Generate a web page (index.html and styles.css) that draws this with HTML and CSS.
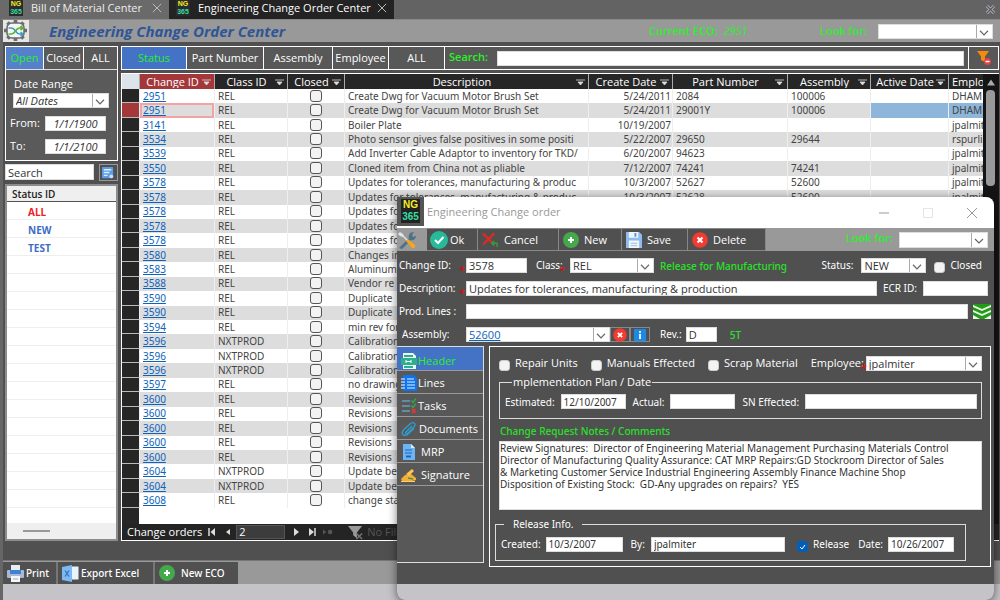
FILE: index.html
```html
<!DOCTYPE html>
<html lang="en">
<head>
<meta charset="utf-8">
<title>Engineering Change Order Center</title>
<link rel="stylesheet" href="styles.css">
</head>
<body>
<svg class="defs" aria-hidden="true">
  <symbol id="x" viewBox="0 0 12 12"><path d="M1 1l10 10M11 1L1 11" fill="none" stroke="currentColor" stroke-width="1.2"/></symbol>
  <symbol id="plus" viewBox="0 0 16 16"><circle cx="8" cy="8" r="8" fill="#43a94b"/><path d="M8 5v6M5 8h6" stroke="#fff" stroke-width="2"/></symbol>
  <symbol id="del" viewBox="0 0 16 16"><circle cx="8" cy="8" r="7.8" fill="#f23c32"/><path d="M5.5 5.5l5 5M10.5 5.5l-5 5" stroke="#fff" stroke-width="2"/></symbol>
</svg>

<nav class="tabs">
  <a class="tab" href="#bom"><span class="ng"><b>NG</b><i>365</i></span>Bill of Material Center<svg class="tab-x"><use href="#x"/></svg></a>
  <a class="tab tab-on" href="#eco"><span class="ng"><b>NG</b><i>365</i></span>Engineering Change Order Center<svg class="tab-x"><use href="#x"/></svg></a>
  <button class="app-x" aria-label="Close all"><svg viewBox="0 0 12 12"><path d="M2 2l8 8M10 2l-8 8" stroke="#a5a7ad" stroke-width="3.4"/><path d="M2 2l8 8M10 2l-8 8" stroke="#55575c" stroke-width="1.4"/></svg></button>
</nav>

<div class="app">
<header class="titlebar">
  <svg class="logo" viewBox="0 0 26 22"><rect width="26" height="22" fill="#e6e6e6"/><path d="M12.500 0v21M1 10.500h23M4.500 2.500l16 16M20.500 2.500l-16 16" stroke="#6c6c6c" stroke-width="3.600"/><rect x="4" y="3" width="17" height="15" rx="5" fill="#f5f5f5" stroke="#6c6c6c" stroke-width="1.6"/><path d="M5.500 8h3c4 0 4 6 8 6h3M17.500 12l2.500 2-2.500 2" fill="none" stroke="#3a9fc0" stroke-width="1.5"/><path d="M5.500 14h3c4 0 4-6 8-6h3M17.500 6L20 8l-2.500 2" fill="none" stroke="#57b43c" stroke-width="1.700"/></svg>
  <h1>Engineering Change Order Center</h1>
  <p class="current">Current ECO: <em>2951</em></p>
  <label class="look" for="look1">Look for:</label>
  <select id="look1" class="field look-select"><option></option></select>
</header>

<main class="work">
  <aside class="side">
    <section class="range">
      <div class="seg"><button class="on">Open</button><button>Closed</button><button>ALL</button></div>
      <div class="range-body">
        <label for="dr" class="range-title">Date Range</label>
        <select id="dr" class="field ital"><option>All Dates</option></select>
        <div class="range-row"><label for="from">From:</label><input id="from" class="field" value="1/1/1900"></div>
        <div class="range-row"><label for="to">To:</label><input id="to" class="field" value="1/1/2100"></div>
      </div>
    </section>
    <div class="side-search">
      <input class="field" aria-label="Search" value="Search">
      <button aria-label="Run search"><svg viewBox="0 0 18 15"><rect x="2" y="1" width="12" height="12" rx="1" fill="#5b9ee6"/><path d="M4 4h8M4 7h6M4 10h4" stroke="#dcecff" stroke-width="1.5"/><circle cx="12" cy="11" r="2" fill="#c8e0fb"/></svg></button>
    </div>
    <section class="status">
      <h2>Status ID</h2>
      <a class="red" href="#all">ALL</a>
      <a href="#new">NEW</a>
      <a href="#test">TEST</a>
      <div class="lines"></div>
      <div class="hscroll"><span></span></div>
    </section>
  </aside>

  <section class="content">
    <div class="filterbar">
      <button class="f1 on">Status</button><button class="f2">Part Number</button><button class="f3">Assembly</button><button class="f4">Employee</button><button class="f4">ALL</button>
      <label for="q">Search:</label>
      <input id="q" class="field q">
      <button class="clear" aria-label="Clear filter"><svg viewBox="0 0 16 16"><path d="M1 1h12L9 6.500V12l-4-2V6.500z" fill="#f58a0c"/><circle cx="11.500" cy="11.500" r="3.500" fill="#e34242"/><path d="M9.500 11.500h4" stroke="#fff" stroke-width="1.500"/></svg></button>
    </div>
    <div class="grid">
      <div class="grid-main">
        <div class="table-wrap">
          <table>
            <colgroup><col class="c0"><col class="c1"><col class="c2"><col class="c3"><col class="c4"><col class="c5"><col class="c6"><col class="c7"><col class="c8"><col class="c9"></colgroup>
            <thead><tr id="head"></tr></thead>
            <tbody id="rows"></tbody>
          </table>
        </div>
        <div class="vscroll"><svg viewBox="0 0 10 8"><path d="M5 1l4 6H1z" fill="#aaa"/></svg><span></span></div>
      </div>
      <footer class="pager">
        <label for="page">Change orders</label>
        <button aria-label="First"><svg viewBox="0 0 10 10"><path d="M2 1v8" stroke="#ddd" stroke-width="1.500"/><path d="M8 1v8L3.500 5z" fill="#ddd"/></svg></button>
        <button aria-label="Previous"><svg viewBox="0 0 10 10"><path d="M7 2v6L3 5z" fill="#ddd"/></svg></button>
        <input id="page" value="2">
        <button aria-label="Next"><svg viewBox="0 0 10 10"><path d="M3 1v8l5-4z" fill="#ddd"/></svg></button>
        <button aria-label="Last"><svg viewBox="0 0 10 10"><path d="M2 1v8l5-4z" fill="#ddd"/><path d="M8 1v8" stroke="#ddd" stroke-width="1.500"/></svg></button>
        <button aria-label="New record"><svg viewBox="0 0 12 10"><path d="M0 2v6l4-3z" fill="#555"/><circle cx="8.500" cy="5" r="2.800" fill="#555"/></svg></button>
        <span class="nofilter"><svg viewBox="0 0 18 16"><path d="M1 1h15l-5.500 7v6l-4-3V8z" fill="#999"/><path d="M10 9l6 6M16 9l-6 6" stroke="#777" stroke-width="1.500"/></svg>No Filter</span>
      </footer>
    </div>
  </section>
</main>

<footer class="actions">
  <button class="print"><svg viewBox="0 0 17 17"><path d="M4 0h9v6H4z" fill="#e8eef6"/><rect x="0" y="5" width="17" height="8" rx="1" fill="#a9b9d3"/><rect x="3" y="5" width="11" height="4" fill="#3f80d4"/><path d="M4 11h9v6H4z" fill="#f4f6fa"/><path d="M6 14h5" stroke="#aaa"/></svg>Print</button>
  <button class="export"><svg viewBox="0 0 17 17"><rect x="8" y="1.500" width="8.500" height="13" fill="#e9f3fd"/><path d="M0 2l10-2v17L0 15z" fill="#7dbaf2"/><path d="M3 5.500l4 6M7 5.500l-4 6" stroke="#2f74c0" stroke-width="1.300"/></svg>Export Excel</button>
  <button class="neweco"><svg><use href="#plus"/></svg>New ECO</button>
</footer>
<div class="strip"></div>
</div>

<section class="dialog" role="dialog" aria-labelledby="dt">
  <header class="dlg-title">
    <span class="ng ng-lg"><b>NG</b><i>365</i></span>
    <h2 id="dt">Engineering Change order</h2>
    <button aria-label="Minimize"><svg viewBox="0 0 10 10"><path d="M0 5h10" stroke="#999"/></svg></button>
    <button aria-label="Maximize"><svg viewBox="0 0 10 10"><path d="M.5.5h9v9h-9z" fill="none" stroke="#e4e4e4"/></svg></button>
    <button aria-label="Close"><svg viewBox="0 0 10 10"><path d="M0 0l10 10M10 0L0 10" stroke="#999"/></svg></button>
  </header>
  <div class="dlg-tools">
    <svg class="wrench" viewBox="0 0 20 20"><path d="M2 18l10-10c-1-3 1-6 5-6l-2 3 1 2 3-1c0 3-3 5-5 4L5 19z" fill="#4c7188"/><path d="M1 4l2-2 3 2 1 2 4 4-1 1-4-4-3-1z" fill="#dfe6ea"/><path d="M9 11l2-2 7 6c1 2-1 4-3 3z" fill="#f7a51c"/></svg>
    <button class="t1"><svg class="ok" viewBox="0 0 18 18"><circle cx="9" cy="9" r="9" fill="#26b99a"/><path d="M5 9l3 3 5.500-6" fill="none" stroke="#fff" stroke-width="2"/></svg>Ok</button>
    <button class="t2"><svg viewBox="0 0 17 17"><path d="M1 1.500l12 12M13 1.500l-12 12" stroke="#dd2b24" stroke-width="2.400"/><path d="M16 16v-4h-5M13 9.500L10.500 12l2.500 2.500" fill="none" stroke="#329e3b" stroke-width="1.500"/></svg>Cancel</button>
    <button class="t3"><svg><use href="#plus"/></svg>New</button>
    <button class="t4"><svg viewBox="0 0 17 17"><path d="M0 0h14l3 3v14H0z" fill="#8fbcec"/><path d="M3 0h10v6H3zM3 9h11v8H3z" fill="#eef5fc"/><path d="M9 1h2v4H9z" fill="#5f91cc"/><path d="M5 12h7M5 14.500h7" stroke="#9dbde0"/></svg>Save</button>
    <button class="t5"><svg><use href="#del"/></svg>Delete</button>
    <label class="look" for="look2">Look for:</label>
    <select id="look2" class="field look2"><option></option></select>
  </div>
  <div class="dlg-body">
    <div class="form">
      <div class="row">
        <label class="lab req" for="cid">Change ID:</label><input id="cid" class="field w-id" value="3578">
        <label class="req cls" for="cls">Class:</label><select id="cls" class="field w-cls"><option>REL</option></select>
        <span class="green">Release for Manufacturing</span>
        <label class="push" for="st">Status:</label><select id="st" class="field w-st"><option>NEW</option></select>
        <label class="check"><input type="checkbox">Closed</label>
      </div>
      <div class="row">
        <label class="lab req" for="desc">Description:</label><input id="desc" class="field grow" value="Updates for tolerances, manufacturing &amp; production">
        <label for="ecr">ECR ID:</label><input id="ecr" class="field w-ecr">
      </div>
      <div class="row">
        <label class="lab" for="pl">Prod. Lines :</label><input id="pl" class="field grow">
        <button class="down" aria-label="Expand"><svg viewBox="0 0 18 15"><rect width="18" height="15" fill="#e9f6e4"/><path d="M0 0h18v1L9 5 0 1zM0 3l9 4 9-4v3l-9 4-9-4zM0 8l9 4 9-4v3l-7 4H7l-7-4z" fill="#229b18"/></svg></button>
      </div>
      <div class="row">
        <label class="lab asm" for="as">Assembly:</label><select id="as" class="field w-as"><option>52600</option></select>
        <button class="mini" aria-label="Clear assembly"><svg viewBox="0 0 16 16"><use href="#del"/></svg></button>
        <button class="mini" aria-label="Assembly info"><svg viewBox="0 0 16 16"><rect x="1" y="1" width="14" height="14" rx="1" fill="#1e88e5"/><path d="M8 3.500v2M8 6.500v6" stroke="#fff" stroke-width="2"/></svg></button>
        <label class="rev" for="rev">Rev.:</label><input id="rev" class="field w-rev" value="D">
        <span class="green st5">5T</span>
      </div>
    </div>
    <div class="split">
      <nav class="pages">
        <a class="on" href="#h"><svg viewBox="0 0 16 16"><path d="M2 0h10l3 3v13H2z" fill="#eafaf4"/><path d="M0 5h16v7H0z" fill="#2dae8c"/><path d="M3 3h9M3 14h9" stroke="#2dae8c" stroke-width="2"/><path d="M5 7v3M5 8.500h5M10 7v3" stroke="#fff"/></svg>Header</a>
        <a href="#l"><svg viewBox="0 0 16 16"><path d="M2 0h11l3 3v13H2z" fill="#0d74ee"/><path d="M6 4h7M6 7h8M6 10h8M6 13h8" stroke="#e6f1ff"/><path d="M0 4h4M0 7h4M0 10h4M0 13h4" stroke="#a9cffb" stroke-width="1.300"/></svg>Lines</a>
        <a href="#t"><svg viewBox="0 0 16 16"><path d="M1 3h8M1 8h8M1 13h8" stroke="#679dbb" stroke-width="1.600"/><path d="M10.500 2.500l1.500 2 3-4M10.500 7.500l1.500 2 3-4" fill="none" stroke="#36a34a" stroke-width="1.400"/><path d="M11 11l3.500 4M14.500 11L11 15" stroke="#e33" stroke-width="1.500"/></svg>Tasks</a>
        <a class="in" href="#d"><svg viewBox="0 0 16 16"><path d="M11 5l-6 6c-1 1 0 2.500 1.500 1.500L13 6c3-3-1-6-4-3L3 8.500c-4 4 0 8 4 4.500l6-5.500" fill="none" stroke="#2f9bd0" stroke-width="1.400"/></svg>Documents</a>
        <a class="in2" href="#m"><svg viewBox="0 0 16 16"><path d="M2 0h8l4 4v12H2z" fill="#6db3f5"/><path d="M10 0v4h4z" fill="#d8ecff"/><path d="M4 6h7M4 9h7" stroke="#1766b6"/><path d="M5 12.500h5" stroke="#1766b6" stroke-width="2"/></svg>MRP</a>
        <a class="in2" href="#s"><svg viewBox="0 0 16 16"><path d="M0 12l4-4 6-1 5 4v2l-4 1H1z" fill="#f5ae3c"/><path d="M5 7l6-5 2 2-5 5z" fill="#ffc44d"/><path d="M7 11l5 1" stroke="#3c9a45" stroke-width="1.500"/><path d="M0 14.500h14" stroke="#ffce65"/></svg>Signature</a>
      </nav>
      <div class="panel">
        <div class="row checks">
          <label class="check"><input type="checkbox">Repair Units</label>
          <label class="check"><input type="checkbox">Manuals Effected</label>
          <label class="check"><input type="checkbox">Scrap Material</label>
          <label class="req push" for="emp">Employee:</label><select id="emp" class="field w-emp"><option>jpalmiter</option></select>
        </div>
        <fieldset class="plan">
          <legend>mplementation Plan / Date</legend>
          <label for="est">Estimated:</label><input id="est" class="field w-d" value="12/10/2007">
          <label for="act">Actual:</label><input id="act" class="field w-d">
          <label for="sn">SN Effected:</label><input id="sn" class="field grow">
        </fieldset>
        <label class="green notes-label" for="notes">Change Request Notes / Comments</label>
        <textarea id="notes" class="field">Review Signatures:  Director of Engineering Material Management Purchasing Materials Control
Director of Manufacturing Quality Assurance: CAT MRP Repairs:GD Stockroom Director of Sales
&amp; Marketing Customer Service Industrial Engineering Assembly Finance Machine Shop
Disposition of Existing Stock:  GD-Any upgrades on repairs?  YES</textarea>
        <fieldset class="release">
          <legend>Release Info.</legend>
          <label for="cr">Created:</label><input id="cr" class="field w-cr" value="10/3/2007">
          <label for="by">By:</label><input id="by" class="field grow" value="jpalmiter">
          <label class="check"><input type="checkbox" checked>Release</label>
          <label for="dt2">Date:</label><input id="dt2" class="field w-dt" value="10/26/2007">
        </fieldset>
      </div>
    </div>
  </div>
  <div class="dlg-foot"></div>
</section>
<script src="app.js"></script>
</body>
</html>
```

FILE: styles.css
```css
* { box-sizing: border-box; }
body, h1, h2, p { margin: 0; }
body {
  min-height: 100vh;
  display: flex;
  flex-direction: column;
  background: #505050;
  color: #fff;
  font: 11px/14px "Open Sans", "Noto Sans", sans-serif;
  overflow: hidden;
}
button, input, select, textarea { font: inherit; color: inherit; margin: 0; padding: 0; border: 0; border-radius: 0; min-width: 0; }
button { background: none; }
a { color: inherit; text-decoration: none; }
.defs { position: absolute; width: 0; height: 0; }
svg { flex: none; display: block; }

.field { background: #fff; color: #333; height: 15px; padding: 0 2px; border: 1px solid #ddd; line-height: 13px; }
select.field {
  appearance: none;
  background: #fff url("data:image/svg+xml,%3Csvg xmlns='http://www.w3.org/2000/svg' width='16' height='14'%3E%3Cpath d='M.5 0v14' stroke='%23aaa'/%3E%3Cpath d='M4 6l4 4 4-4' fill='none' stroke='%23666' stroke-width='1.200'/%3E%3C/svg%3E") no-repeat right center;
}

.tabs { display: flex; height: 19px; background: #636363; }
.tab { display: flex; align-items: flex-start; padding: 0 7px 0 9px; height: 19px; width: 169px; line-height: 16px; color: #eee; background: #6a6a6a; }
.tab-on { background: #232323; color: #fff; width: 225px; padding: 0 7px; font-weight: 500; }
.tab-x { width: 10px; height: 10px; margin: 3px 0 0 auto; color: #bbb; }
.ng { width: 14px; margin-right: 8px; background: #2b2b2b; font: bold 7px/8px "Liberation Sans", sans-serif; text-align: center; }
.ng b, .ng i { display: block; font-style: normal; }
.ng b { color: #f5ee25; }
.ng i { color: #35dfa4; }
.app-x { margin-left: auto; margin-right: 4px; width: 11px; }

.app { flex: 1; display: flex; flex-direction: column; border-left: 3px solid #666; border-top: 1px solid #888; }
.titlebar { display: flex; align-items: center; height: 22px; background: #999; padding-right: 7px; }
.logo { width: 26px; height: 22px; }
h1 { margin-left: 20px; font: italic bold 15px/20px "Open Sans", sans-serif; color: #2f5597; }
.current { margin-left: auto; color: #27f327; width: 171px; font-weight: 600; }
.current em { font-weight: 400; margin-left: 3px; }
.look { color: #27f327; font-weight: 600; }
.titlebar .look { width: 58px; }
.look-select { width: 115px; }

.work { flex: 1; display: flex; gap: 3px; padding: 4px 1px 19px 2px; }
.side { width: 113px; display: flex; flex-direction: column; gap: 3px; }
.range { border: 1px solid #fff; background: #5a5a5a; }
.seg { display: grid; grid-template-columns: 37px 1fr 34px; height: 23px; border-bottom: 1px solid #ddd; }
.seg button + button { border-left: 1px solid #fff; }
.on { background: #4472c4; color: #27f327; }
.seg .on { background: #5580cb; }
.range-body { display: flex; flex-direction: column; padding: 6px 7px 6px 7px; height: 90px; }
.range-title { line-height: 15px; margin-bottom: 2px; padding-left: 1px; }
.ital { width: 96px; font-style: italic; }
.range-row { display: flex; justify-content: space-between; padding: 0 4px 0 0; margin-top: 8px; }
.range-row label { margin-left: -3px; }
.range-row .field { width: 61px; font-style: italic; text-align: center; }
.side-search { display: flex; justify-content: space-between; height: 17px; }
.side-search .field { width: 89px; height: 16px; }
.side-search button { border: 1px solid #999; width: 19px; }
.side-search svg { width: 17px; height: 14px; }
.status { flex: 1; display: flex; flex-direction: column; border: 2px solid #8c8c8c; background: #fff; color: #3d6dc2; font-size: 10px; font-weight: 700; }
.status h2 { font-size: 10px; line-height: 16px; height: 16px; color: #222; background: #efefef; border-bottom: 1px solid #555; padding-left: 5px; font-weight: 600; }
.status a { height: 18px; line-height: 20px; padding-left: 21px; border-bottom: 1px solid #eee; }
.status .red { color: #ed1c24; }
.lines { flex: 1; background: repeating-linear-gradient(#fff 0 17px, #eee 17px 18px); }
.hscroll { height: 16px; background: #efefef; padding: 7px 16px; }
.hscroll span { display: block; width: 27px; height: 2px; background: #999; }

.content { flex: 1; min-width: 0; display: flex; flex-direction: column; gap: 3px; }
.filterbar { display: flex; align-items: center; height: 24px; border: 1px solid #fff; background: #585858; }
.filterbar button { height: 22px; border-right: 1px solid #fff; font-weight: 500; }
.filterbar .f1 { width: 65px; font-weight: 400; }
.f2 { width: 77px; }
.f3 { width: 69px; }
.f4 { width: 56px; }
.filterbar label { color: #27f327; font-weight: 600; margin: 0 9px 3px 4px; }
.q { flex: 1; margin-right: 4px; }
.filterbar .clear { width: 30px; border: 0; border-left: 1px solid #fff; padding-left: 7px; }
.clear svg { width: 16px; height: 16px; }
.grid { flex: 1; display: flex; flex-direction: column; border: 1px solid #fff; border-right: 0; }
.grid-main { flex: 1; display: flex; background: #fff; }
.table-wrap { flex: 1; min-width: 0; background: linear-gradient(90deg, #262626 17px, #fff 17px); padding-bottom: 14px; display: flex; }
table { table-layout: fixed; width: 100%; height: 434px; border-collapse: separate; border-spacing: 0; color: #444; font-family: "Noto Sans", sans-serif; font-size: 10px; }
.c0 { width: 18px; } .c1 { width: 75px; } .c2 { width: 73px; } .c3 { width: 57px; } .c4 { width: 244px; }
.c5 { width: 84px; } .c6 { width: 115px; } .c7 { width: 83px; } .c8 { width: 78px; } .c9 { width: 34px; }
th, td { padding: 0 3px 1px; overflow: hidden; white-space: nowrap; line-height: 12px; border-right: 1px solid #eee; }
th { background: #262626; color: #fff; font: 500 11px/13px "Open Sans", sans-serif; height: 15px; border-color: #aaa; }
th:first-child { background: #dde3ea; }
th:nth-child(2) { background: #a4373a; }
th div { display: flex; align-items: center; }
th span { flex: 1; text-align: center; overflow: hidden; }
th svg { width: 9px; height: 7px; margin-top: 3px; }
td:first-child { background: #262626; border-bottom: 1px solid #bbb; }
td:last-child, th:last-child { border: 0; padding-right: 0; }
tbody tr:nth-child(even) td:not(:first-child) { background: #ddd; }
td a { color: #0b63bd; text-decoration: underline; }
td.num { text-align: right; padding-right: 1px; }
td.mid { text-align: center; }
tbody tr.sel td:first-child { background: #a4373a; }
tbody tr.sel td:nth-child(2) { box-shadow: inset 0 0 0 2px #f2a3a6; }
tbody tr.sel td:nth-child(n+9) { background: #8db6da; }
td input { appearance: none; display: block; width: 12px; height: 12px; margin: 0 auto; border: 1px solid #555; border-radius: 3px; background: #f3f3f3; }
.vscroll { width: 16px; background: #141414; padding: 4px 3px; display: flex; flex-direction: column; gap: 3px; }
.vscroll svg { width: 10px; height: 9px; }
.vscroll span { width: 9px; height: 96px; border-radius: 4px; background: #999; }
.pager { display: flex; align-items: center; height: 16px; background: #242424; padding-left: 5px; font-weight: 500; }
.pager button { width: 16px; height: 15px; padding: 0 3px; }
.pager button svg { width: 10px; height: 10px; }
.pager label { margin-right: 2px; }
.pager input { width: 49px; height: 14px; background: #3c3c3c; border: 1px solid #555; margin-right: 3px; padding-left: 2px; }
.nofilter { display: flex; align-items: center; gap: 3px; margin-left: 11px; color: #555; font-weight: 400; }
.nofilter svg { width: 17px; height: 15px; }
.actions { display: flex; height: 24px; background: #999; border-top: 1px solid #777; }
.actions button { display: flex; align-items: center; gap: 2px; height: 22px; margin-top: 1px; padding-left: 4px; border-right: 2px solid #777; background: #505050; font: 500 10px/14px "Noto Sans", sans-serif; }
.actions svg { width: 17px; height: 17px; }
.actions .print { width: 55px; }
.actions .export { width: 97px; }
.actions .neweco { width: 83px; gap: 6px; border: 0; }
.actions .neweco svg { width: 16px; height: 16px; }
.strip { height: 16px; background: #c3c3c8; }

/* Change order window, floating over the list */
.dialog { position: absolute; left: 397px; right: 6px; top: 197px; bottom: 0; display: flex; flex-direction: column; background: #505050; border-radius: 0 8px 8px 8px; overflow: hidden; box-shadow: 0 2px 10px #0008; font-family: "Noto Sans", sans-serif; font-size: 10px; }
.dlg-title { display: flex; align-items: center; height: 31px; background: #fff; color: #999; }
.dlg-title h2 { flex: 1; font: 400 11px/14px "Open Sans", sans-serif; padding: 0 0 2px 3px; }
.dlg-title button { width: 44px; padding: 0 17px; height: 28px; }
.dlg-title button svg { width: 10px; height: 10px; }
.ng-lg { width: 27px; height: 29px; background: #555; padding: 2px 4px; margin: 0; align-self: flex-start; }
.ng-lg b, .ng-lg i { background: #222; font-size: 10px; line-height: 12px; }
.dlg-tools { display: flex; align-items: center; height: 23px; background: #999; padding-right: 6px; font-family: "Open Sans", sans-serif; font-size: 11px; }
.wrench { width: 20px; height: 20px; margin-right: 10px; }
.dlg-tools button { display: flex; align-items: center; height: 23px; background: #505050; border: 1px solid #888; border-left: 0; }
.dlg-tools button svg { width: 16px; height: 16px; margin-left: 4px; }
.dlg-tools .ok { width: 18px; height: 18px; margin-left: 3px; }
.t1 { width: 51px; gap: 2px; }
.t2 { width: 81px; gap: 6px; }
.t3 { width: 63px; gap: 5px; }
.t4 { width: 66px; gap: 5px; }
.t5 { width: 78px; gap: 5px; }
.dlg-tools .look { margin: 0 6px 3px auto; }
.look2 { width: 89px; height: 16px; }
.dlg-body { flex: 1; display: flex; flex-direction: column; }
.form { display: flex; flex-direction: column; gap: 8px; padding: 7px 6px 4px 2px; }
.row { display: flex; align-items: center; height: 15px; white-space: nowrap; }
.row > label { padding-bottom: 2px; }
.lab { width: 67px; }
.asm { padding-left: 3px; }
.req { position: relative; }
.req::after { content: "*"; position: absolute; right: 1px; top: 5px; color: #e00; }
.grow { flex: 1; }
.green { color: #27e327; font-weight: 500; }
.row .green { font-weight: 500; }
.w-id { width: 61px; }
.cls { margin-left: 9px; width: 34px; }
.cls::after { right: 5px; }
.w-cls { width: 84px; margin-right: 6px; }
.push { margin-left: auto; }
.w-st { width: 65px; margin: 0 8px; }
.row .field { font-family: "Open Sans", sans-serif; font-size: 11px; }
.check { display: flex; align-items: center; }
.check input { appearance: none; width: 11px; height: 11px; margin: 5px 5px 0 0; background: #f3f3f3; border: 1px solid #ccc; border-radius: 3px; }
.check input:checked { border-color: #005fb8; background: #005fb8 url("data:image/svg+xml,%3Csvg xmlns='http://www.w3.org/2000/svg' width='9' height='9'%3E%3Cpath d='M2 5l2 2 3-4' fill='none' stroke='white'/%3E%3C/svg%3E"); }
.row > .check { padding-right: 6px; }
.row label[for="ecr"] { margin: 0 6px; }
.w-ecr { width: 65px; }
.form .down { width: 18px; margin: 0 -3px 0 5px; }
.down svg { width: 18px; height: 15px; }
.w-as { width: 144px; text-decoration: underline; }
select.w-as { color: #0b63bd; }
.mini { width: 20px; height: 15px; border: 1px solid #888; }
.mini svg { width: 18px; height: 14px; }
.rev { margin: 0 4px 0 10px; }
.w-rev { width: 31px; }
.st5 { margin-left: 13px; }
.split { display: flex; gap: 5px; align-items: flex-start; padding-right: 3px; }
.pages { width: 87px; height: 217px; border: 1px solid #ddd; border-left: 0; background: #585858; font-family: "Open Sans", sans-serif; font-size: 11px; }
.pages a { display: flex; align-items: center; gap: 1px; height: 23px; border-bottom: 1px solid #999; padding: 2px 0 0 4px; }
.pages .on { height: 24px; padding-top: 4px; }
.pages svg { width: 16px; height: 16px; }
.pages .in { gap: 2px; }
.pages .in2 { gap: 4px; }
.panel { flex: 1; min-width: 0; display: flex; flex-direction: column; height: 221px; border: 1px solid #fff; padding: 9px 8px 0 9px; }
.checks { gap: 7px; }
.checks label { font-family: "Open Sans", sans-serif; font-size: 11px; }
.checks .push { width: 58px; margin-right: -9px; }
.w-emp { width: 118px; }
fieldset { display: flex; align-items: center; min-width: 0; margin: 0; border: 1px solid #ddd; padding: 5px 4px 0 5px; height: 44px; }
legend { padding: 0 1px; line-height: 14px; }
.plan { margin-top: 4px; }
.plan legend { margin-left: 7px; font-family: "Open Sans", sans-serif; font-size: 11px; }
.w-d { width: 65px; margin: 0 7px 0 6px; }
.plan .grow { margin-left: 6px; }
.notes-label { padding-left: 1px; line-height: 14px; margin-top: 5px; }
textarea.field { height: 69px; margin-top: 3px; resize: none; padding: 0; line-height: 12px; white-space: pre; overflow: hidden; }
.release { margin: 7px 16px 0 -4px; }
.release legend { margin-left: 3px; padding: 0 9px; }
.w-cr { width: 77px; margin: 0 8px 0 5px; }
.release .grow { margin: 0 12px 0 6px; }
.release .check { margin-right: 9px; }
.w-dt { width: 66px; margin: 0 7px 0 5px; }
.dlg-foot { height: 16px; background: #c3c3c8; }
```

FILE: app.js
```js
const columns = ["", "Change ID", "Class ID", "Closed", "Description", "Create Date", "Part Number", "Assembly", "Active Date", "Emplo"];
const orders = [
  ["2951", "REL", "Create Dwg for Vacuum Motor Brush Set", "5/24/2011", "2084", "100006", "DHAM"],
  ["2951", "REL", "Create Dwg for Vacuum Motor Brush Set", "5/24/2011", "29001Y", "100006", "DHAM"],
  ["3141", "REL", "Boiler Plate", "10/19/2007", "", "", "jpalmiter"],
  ["3534", "REL", "Photo sensor gives false positives in some positi", "5/22/2007", "29650", "29644", "rspurling"],
  ["3539", "REL", "Add Inverter Cable Adaptor to inventory for TKD/", "6/20/2007", "94623", "", "jpalmiter"],
  ["3550", "REL", "Cloned item from China not as pliable", "7/12/2007", "74241", "74241", "jpalmiter"],
  ["3578", "REL", "Updates for tolerances, manufacturing & produc", "10/3/2007", "52627", "52600", "jpalmiter"],
  ["3578", "REL", "Updates for tolerances, manufacturing & produc", "10/3/2007", "52628", "52600", "jpalmiter"],
  ["3578", "REL", "Updates for"], ["3578", "REL", "Updates for"], ["3578", "REL", "Updates for"],
  ["3580", "REL", "Changes in"], ["3583", "REL", "Aluminum"], ["3588", "REL", "Vendor re"],
  ["3590", "REL", "Duplicate"], ["3590", "REL", "Duplicate"], ["3594", "REL", "min rev for"],
  ["3596", "NXTPROD", "Calibration"], ["3596", "NXTPROD", "Calibration"], ["3596", "NXTPROD", "Calibration"],
  ["3597", "REL", "no drawing"], ["3600", "REL", "Revisions"], ["3600", "REL", "Revisions"],
  ["3600", "REL", "Revisions"], ["3600", "REL", "Revisions"], ["3600", "REL", "Revisions"],
  ["3604", "NXTPROD", "Update be"], ["3604", "NXTPROD", "Update be"], ["3608", "REL", "change sta"]
];
const arrow = '<svg viewBox="0 0 9 7"><path d="M0 1h9M2 3l2.500 3L7 3z" stroke="#ddd" fill="#ddd" stroke-width=".8"/></svg>';
document.getElementById("head").innerHTML = columns.map((name, i) =>
  `<th><div><span>${name}</span>${i > 0 && i < 9 ? arrow : ""}</div></th>`).join("");
document.getElementById("rows").innerHTML = orders.map(([id, cls, desc, date = "", part = "", asm = "", emp = ""], i) =>
  `<tr class="${i === 1 ? "sel" : ""}"><td></td><td><a href="#${id}">${id}</a></td><td>${cls}</td>` +
  `<td class="mid"><input type="checkbox" aria-label="Closed ${id}"></td><td>${desc.replace("&", "&amp;")}</td>` +
  `<td class="num">${date}</td><td>${part}</td><td>${asm}</td><td></td><td>${emp}</td></tr>`).join("");
```
